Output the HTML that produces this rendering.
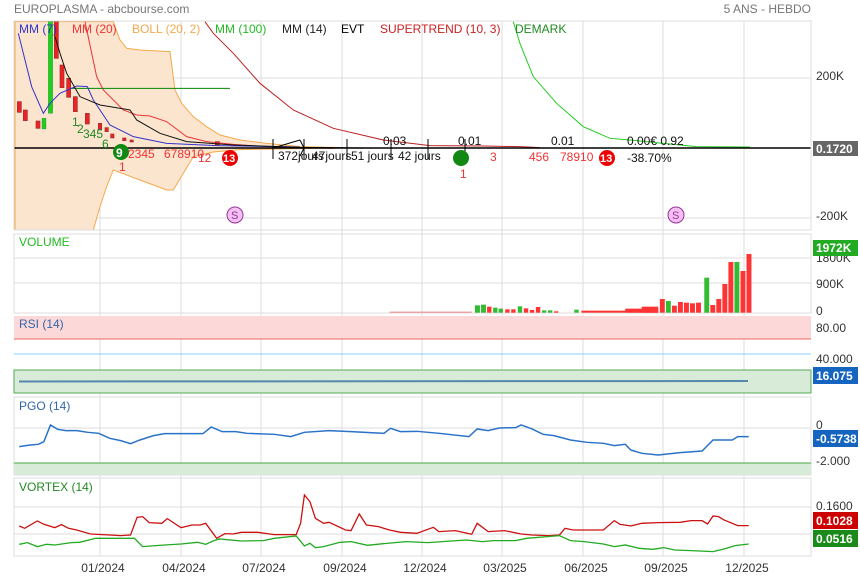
<!DOCTYPE html>
<html><head><meta charset="utf-8"><style>
body{margin:0;background:#fff;}
svg{display:block;font-family:"Liberation Sans",sans-serif;}
</style></head><body>
<svg width="860" height="579" viewBox="0 0 860 579">
<rect width="860" height="579" fill="#fff"/>
<text x="14" y="13" font-size="12" fill="#777">EUROPLASMA - abcbourse.com</text>
<text x="811" y="13" font-size="12" fill="#777" text-anchor="end">5 ANS - HEBDO</text>

<g stroke="#ddd" stroke-width="1">
<line x1="100" y1="21" x2="100" y2="556"/><line x1="181" y1="21" x2="181" y2="556"/><line x1="261" y1="21" x2="261" y2="556"/><line x1="342" y1="21" x2="342" y2="556"/><line x1="422" y1="21" x2="422" y2="556"/><line x1="502" y1="21" x2="502" y2="556"/><line x1="583" y1="21" x2="583" y2="556"/><line x1="663" y1="21" x2="663" y2="556"/><line x1="744" y1="21" x2="744" y2="556"/>
<line x1="14" y1="78" x2="811" y2="78"/><line x1="14" y1="218" x2="811" y2="218"/>
</g>
<g transform="scale(0.3333)">
<polygon fill="#fbe5cf" stroke="#f5a94c" stroke-width="3" points="45,65 340,65 360,120 380,145 420,150 510,155 525,270 545,310 580,350 620,380 660,405 720,420 800,430 900,440 1030,443 900,446 720,449 640,456 580,470 520,570 500,570 420,540 340,510 320,560 300,620 280,690 45,690"/>
<polyline fill="none" stroke="#e33" stroke-width="3" points="255,65 290,230 310,270 370,330 410,345 450,348 500,365 520,380 560,410 620,425 700,433 800,440 1000,445"/>
<polyline fill="none" stroke="#b22" stroke-width="3" points="615,65 640,100 700,160 780,250 880,330 1000,385 1150,420 1290,437 1450,438 1560,440 1620,443"/>
<line x1="200" y1="265" x2="690" y2="265" stroke="#080" stroke-width="3"/>
<g fill="#e22" stroke="#933" stroke-width="2">
<rect x="52" y="305" width="12" height="32"/><rect x="70" y="330" width="12" height="32"/><rect x="108" y="363" width="12" height="22"/><rect x="163" y="65" width="12" height="110"/><rect x="180" y="195" width="12" height="68"/><rect x="200" y="235" width="12" height="57"/><rect x="220" y="290" width="12" height="45"/><rect x="256" y="340" width="12" height="32"/><rect x="295" y="370" width="10" height="18"/><rect x="315" y="383" width="10" height="12"/><rect x="332" y="402" width="10" height="12"/><rect x="368" y="414" width="10" height="8"/><rect x="390" y="420" width="10" height="6"/><rect x="646" y="425" width="12" height="10"/>
</g>
<rect x="145" y="65" width="13" height="275" fill="#2c2" stroke="#282"/>
<rect x="126" y="355" width="12" height="32" fill="#2c2" stroke="#282"/>
<polyline fill="none" stroke="#33c" stroke-width="3" points="55,100 75,180 95,260 130,340 150,310 180,280 230,258 262,260 280,300 330,375 400,410 500,430 650,437 900,441"/>
<polyline fill="none" stroke="#111" stroke-width="3" points="165,110 180,160 200,220 240,290 300,315 390,330 410,360 480,400 560,425 700,435 900,442 1100,444"/>
<polyline fill="none" stroke="#2c2" stroke-width="3" points="1540,65 1560,130 1600,230 1670,310 1750,380 1830,415 1890,420 1990,430 2090,440 2250,441"/>
</g>
<line x1="14" y1="148" x2="811" y2="148" stroke="#000" stroke-width="1.5"/>
<g stroke="#000" fill="none"><path d="M273 139v20M304 139v20M347 139v20M391 139v20M428 139v20M465 139v20M273 148l27-8M300 140l4 8-4 8"/></g>
<rect x="14" y="21" width="797" height="209" fill="none" stroke="#ddd"/>
<g font-size="12">
<text x="19" y="33" fill="#33c">MM (7)</text><text x="72" y="33" fill="#e33">MM (20)</text><text x="132" y="33" fill="#f5a94c">BOLL (20, 2)</text><text x="215" y="33" fill="#2b2">MM (100)</text><text x="282" y="33" fill="#222">MM (14)</text><text x="341" y="33" fill="#000">EVT</text><text x="380" y="33" fill="#c22">SUPERTREND (10, 3)</text><text x="515" y="33" fill="#282">DEMARK</text>
</g>
<g font-size="12" fill="#282"><text x="72" y="126">1</text><text x="77" y="133">2</text><text x="83" y="138">345</text><text x="102" y="148">6</text></g>
<circle cx="121" cy="152" r="8" fill="#181"/><text x="116" y="157" font-size="12" fill="#fff" font-weight="bold">9</text>
<g font-size="12" fill="#e33"><text x="128" y="158">2345</text><text x="164" y="158">678910</text><text x="198" y="162">12</text><text x="119" y="171">1</text><text x="490" y="161">3</text><text x="529" y="161">456</text><text x="560" y="161">78910</text><text x="460" y="178">1</text></g>
<circle cx="230" cy="158" r="8" fill="#e00"/><text x="223" y="162" font-size="11" fill="#fff" font-weight="bold">13</text>
<circle cx="607" cy="158" r="8" fill="#e00"/><text x="600" y="162" font-size="11" fill="#fff" font-weight="bold">13</text>
<circle cx="461" cy="158" r="8" fill="#181"/>
<g font-size="12" fill="#111"><text x="278" y="160">372jours</text><text x="312" y="160">47jours</text><text x="351" y="160">51 jours</text><text x="398" y="160">42 jours</text><text x="383" y="145">0.03</text><text x="458" y="145">0.01</text><text x="551" y="145">0.01</text><text x="627" y="145">0.00€ 0.92</text><text x="627" y="162">-38.70%</text></g>
<circle cx="235" cy="215" r="8" fill="#f4c0f4" stroke="#939"/><text x="231" y="219" font-size="11" fill="#939">S</text>
<circle cx="676" cy="215" r="8" fill="#f4c0f4" stroke="#939"/><text x="672" y="219" font-size="11" fill="#939">S</text>
<g font-size="12" fill="#333"><text x="816" y="80">200K</text><text x="816" y="220">-200K</text></g>
<rect x="813" y="141" width="45" height="15" fill="#666"/><text x="816" y="153" font-size="12" fill="#fff" font-weight="bold">0.1720</text>

<rect x="14" y="234" width="797" height="79" fill="none" stroke="#ddd"/>
<line x1="14" y1="258" x2="811" y2="258" stroke="#ddd"/><line x1="14" y1="283" x2="811" y2="283" stroke="#ddd"/>
<text x="19" y="246" font-size="12" fill="#2b2">VOLUME</text>
<g transform="translate(0,230) scale(0.5485,0.3333)">
<rect x="710" y="245" width="150" height="3" fill="#e88"/>
<g fill="#3b3"><rect x="866" y="226" width="9" height="22"/><rect x="877" y="224" width="9" height="24"/><rect x="899" y="233" width="8" height="15"/><rect x="909" y="236" width="8" height="12"/><rect x="944" y="229" width="8" height="19"/><rect x="988" y="241" width="8" height="7"/><rect x="999" y="241" width="8" height="7"/><rect x="1047" y="239" width="8" height="9"/><rect x="1214" y="213" width="9" height="35"/><rect x="1284" y="143" width="9" height="105"/><rect x="1339" y="96" width="9" height="152"/></g>
<g fill="#f33"><rect x="888" y="230" width="8" height="18"/><rect x="921" y="238" width="8" height="10"/><rect x="932" y="238" width="8" height="10"/><rect x="955" y="235" width="8" height="13"/><rect x="966" y="240" width="8" height="8"/><rect x="977" y="231" width="8" height="17"/><rect x="1010" y="244" width="8" height="4"/><rect x="1060" y="242" width="140" height="6"/><rect x="1140" y="236" width="60" height="12"/><rect x="1170" y="230" width="30" height="18"/><rect x="1203" y="207" width="9" height="41"/><rect x="1225" y="227" width="9" height="21"/><rect x="1236" y="216" width="9" height="32"/><rect x="1247" y="218" width="9" height="30"/><rect x="1258" y="220" width="9" height="28"/><rect x="1269" y="218" width="9" height="30"/><rect x="1295" y="225" width="9" height="23"/><rect x="1306" y="207" width="9" height="41"/><rect x="1317" y="162" width="9" height="86"/><rect x="1328" y="96" width="9" height="152"/><rect x="1350" y="123" width="9" height="125"/><rect x="1361" y="72" width="9" height="176"/></g>
</g>
<g font-size="12" fill="#333"><text x="816" y="262">1800K</text><text x="816" y="288">900K</text><text x="816" y="315">0</text></g>
<rect x="813" y="240" width="45" height="16" fill="#2a2"/><text x="816" y="252" font-size="12" fill="#fff" font-weight="bold">1972K</text>

<rect x="14" y="316" width="797" height="23" fill="#fdd8d8"/><line x1="14" y1="339" x2="811" y2="339" stroke="#e66"/>
<line x1="14" y1="354" x2="811" y2="354" stroke="#8cf"/>
<rect x="14" y="370" width="797" height="23" fill="#d8ead8" stroke="#5a5"/>
<line x1="19" y1="381.5" x2="748" y2="381" stroke="#58a" stroke-width="2"/>
<text x="19" y="328" font-size="12" fill="#36a">RSI (14)</text>
<g font-size="12" fill="#333"><text x="816" y="332">80.00</text><text x="816" y="363">40.000</text></g>
<rect x="813" y="367" width="45" height="17" fill="#1565c0"/><text x="816" y="380" font-size="12" fill="#fff" font-weight="bold">16.075</text>

<rect x="14" y="397" width="797" height="78" fill="none" stroke="#ddd"/>
<line x1="14" y1="428" x2="811" y2="428" stroke="#ddd"/>
<rect x="14" y="463" width="797" height="12" fill="#d8ead8"/><line x1="14" y1="463" x2="811" y2="463" stroke="#4a4"/>
<text x="19" y="410" font-size="12" fill="#36a">PGO (14)</text>
<g transform="translate(0,230) scale(0.5485,0.3333)"><polyline fill="none" stroke="#2a72c8" stroke-width="1.5" vector-effect="non-scaling-stroke" points="35,650 55,645 70,643 80,635 92,585 105,598 120,602 140,602 160,607 180,610 200,625 220,632 238,641 255,630 280,617 300,611 370,611 385,591 405,605 430,605 450,610 500,613 530,620 555,607 600,602 640,605 700,610 712,595 730,605 760,604 800,610 855,620 870,597 890,602 910,594 940,593 950,585 970,597 990,613 1010,617 1040,630 1070,637 1100,640 1120,647 1140,643 1150,660 1170,670 1200,675 1240,668 1280,663 1300,630 1335,630 1345,620 1365,620"/></g>
<g font-size="12" fill="#333"><text x="816" y="429">0</text><text x="816" y="465">-2.000</text></g>
<rect x="813" y="430" width="45" height="17" fill="#1565c0"/><text x="816" y="443" font-size="12" fill="#fff" font-weight="bold">-0.5738</text>

<rect x="14" y="478" width="797" height="78" fill="none" stroke="#ddd"/>
<line x1="14" y1="507" x2="811" y2="507" stroke="#ddd"/><line x1="14" y1="534" x2="811" y2="534" stroke="#ddd"/>
<text x="19" y="491" font-size="12" fill="#282">VORTEX (14)</text>
<g transform="translate(0,230) scale(0.5485,0.3333)" fill="none" stroke-width="1.3">
<polyline stroke="#c11" vector-effect="non-scaling-stroke" points="35,888 45,895 68,873 80,883 100,893 112,884 125,895 140,900 165,912 200,915 220,917 238,915 250,862 260,860 272,878 295,880 305,866 330,893 350,885 365,885 375,880 395,925 410,911 425,912 440,907 470,907 500,914 540,914 548,880 555,795 565,815 575,865 590,880 600,877 630,900 640,902 655,852 668,885 690,890 710,900 730,907 760,910 790,892 800,905 830,902 860,913 870,880 890,905 920,902 950,912 970,915 1000,917 1020,915 1030,895 1045,900 1100,900 1120,872 1130,883 1150,888 1170,880 1200,878 1240,877 1260,872 1280,872 1290,882 1300,858 1310,860 1320,870 1345,887 1365,887"/>
<polyline stroke="#2a2" vector-effect="non-scaling-stroke" points="35,943 50,938 68,950 85,943 100,945 130,938 145,937 175,925 245,925 260,950 300,945 330,942 360,937 375,943 390,932 400,927 440,933 480,932 500,925 540,918 555,948 565,940 575,953 590,950 620,937 640,935 670,946 700,941 740,935 780,938 850,930 880,935 900,932 940,932 960,925 1020,917 1040,932 1065,935 1100,942 1120,950 1140,945 1165,955 1190,958 1210,953 1230,960 1260,962 1300,965 1320,957 1340,947 1365,942"/>
</g>
<text x="816" y="510" font-size="12" fill="#333">0.1600</text>
<rect x="813" y="512" width="45" height="17" fill="#c00"/><text x="816" y="525" font-size="12" fill="#fff" font-weight="bold">0.1028</text>
<rect x="813" y="530" width="45" height="17" fill="#1a8a1a"/><text x="816" y="543" font-size="12" fill="#fff" font-weight="bold">0.0516</text>

<g font-size="12" fill="#333" text-anchor="middle"><text x="103" y="572">01/2024</text><text x="184" y="572">04/2024</text><text x="264" y="572">07/2024</text><text x="345" y="572">09/2024</text><text x="425" y="572">12/2024</text><text x="505" y="572">03/2025</text><text x="586" y="572">06/2025</text><text x="666" y="572">09/2025</text><text x="747" y="572">12/2025</text></g>
</svg>
</body></html>
